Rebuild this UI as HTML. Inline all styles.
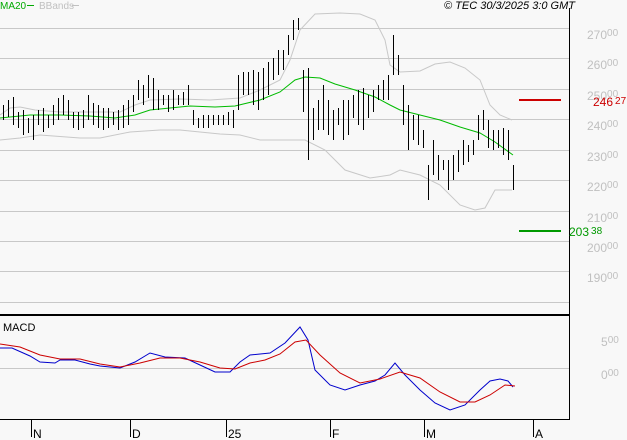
<!DOCTYPE html>
<html><head><meta charset="utf-8"><style>
html,body{margin:0;padding:0;background:#f8f8f8;width:627px;height:440px;overflow:hidden}
svg{display:block}
text{font-family:"Liberation Sans",sans-serif}
</style></head><body>
<svg width="627" height="440" xmlns="http://www.w3.org/2000/svg">
<rect width="627" height="440" fill="#f8f8f8"/>
<g stroke="#c8c8c8" stroke-width="1">
<line x1="0" y1="28.5" x2="569" y2="28.5"/><line x1="0" y1="58.5" x2="569" y2="58.5"/>
<line x1="0" y1="89.5" x2="569" y2="89.5"/><line x1="0" y1="119.5" x2="569" y2="119.5"/>
<line x1="0" y1="150.5" x2="569" y2="150.5"/><line x1="0" y1="180.5" x2="569" y2="180.5"/>
<line x1="0" y1="211.5" x2="569" y2="211.5"/><line x1="0" y1="241.5" x2="569" y2="241.5"/>
<line x1="0" y1="271.5" x2="569" y2="271.5"/><line x1="0" y1="302.5" x2="569" y2="302.5"/>
<line x1="0" y1="368.5" x2="569" y2="368.5"/>
</g>
<g fill="none" stroke="#c8c8c8" stroke-width="1">
<polyline points="0,115 10,108 20,107 35,110 60,112 90,112 120,112 135,105 150,100 180,99 210,100 240,98 260,90 280,80 290,60 300,30 315,14 340,13 360,14 375,20 385,40 390,65 400,72 420,71 435,64 450,62 465,68 480,80 490,105 500,115 512,120"/>
<polyline points="0,140 20,138 40,135 80,138 100,138 130,132 160,130 180,130 200,132 220,134 240,135 260,140 290,140 305,140 325,150 345,170 370,178 390,175 400,170 420,175 440,185 460,205 475,210 485,208 495,190 512,190"/>
</g>
<polyline fill="none" stroke="#00bb00" stroke-width="1" points="0,118 30,115 60,115 90,116 115,118 135,115 150,110 170,108 190,106 215,107 235,106 260,100 280,92 295,80 305,77 320,78 335,84 355,90 375,97 390,105 400,110 420,115 440,120 460,127 480,133 495,142 513,155"/>
<g transform="translate(0.5,0)">
<path stroke="#000" stroke-width="1" fill="none" shape-rendering="crispEdges" d="M3,105V120M8,100V117M13,97V125M18,112V128M23,110V135M28,118V133M33,115V140M38,110V125M43,108V132M48,115V128M53,105V125M58,98V120M63,95V115M68,100V120M73,112V128M78,112V130M83,110V128M88,95V120M93,103V125M98,105V128M103,108V130M108,108V128M113,112V125M118,110V130M123,105V128M128,100V125M133,95V112M138,80V100M143,85V105M148,75V98M153,78V110M158,90V110M163,95V105M168,95V112M173,90V110M178,95V105M183,92V105M188,85V105M193,110V125M198,118V128M203,115V128M208,115V128M213,115V125M218,115V125M223,115V125M228,112V125M233,110V128M238,75V110M243,72V95M248,72V95M253,70V105M258,72V110M263,68V100M268,62V95M273,58V80M278,50V75M283,50V70M288,35V55M293,20V40M298,18V30M303,70V112M308,68V160M313,108V140M318,100V130M323,85V130M328,100V135M333,110V140M338,108V125M343,100V140M348,100V135M353,95V118M358,90V125M363,88V130M368,95V118M373,90V112M378,85V100M383,80V100M388,75V100M393,35V75M398,55V75M403,85V125M408,105V150M413,115V140M418,115V145M423,130V148M428,165V200M433,140V175M438,155V180M443,160V170M448,160V190M453,155V180M458,150V172M463,140V165M468,145V162M473,140V155M478,115V140M483,110V130M488,120V148M493,130V150M498,130V148M503,128V155M508,130V160M513,165V190"/>
</g>
<rect x="0" y="314" width="570" height="2" fill="#000"/>
<line x1="569.5" y1="8" x2="569.5" y2="420" stroke="#000"/>
<line x1="0" y1="419.5" x2="570" y2="419.5" stroke="#000"/>
<g stroke="#000"><line x1="31.5" y1="420" x2="31.5" y2="437"/><line x1="130.5" y1="420" x2="130.5" y2="437"/><line x1="226.5" y1="420" x2="226.5" y2="437"/><line x1="330.5" y1="420" x2="330.5" y2="437"/><line x1="424.5" y1="420" x2="424.5" y2="437"/><line x1="533.5" y1="420" x2="533.5" y2="437"/></g>
<g font-size="12" fill="#000"><text x="33" y="438">N</text><text x="132" y="438">D</text><text x="228" y="438">25</text><text x="332" y="438">F</text><text x="426" y="438">M</text><text x="535" y="438">A</text></g>
<polyline fill="none" stroke="#0000cc" stroke-width="1" points="0,348 12,348 30,356 40,362 55,363 60,360 75,360 90,364 100,366 120,368 135,362 150,353 165,357 185,358 200,365 215,372 230,372 240,362 250,355 270,353 285,343 300,327 308,340 315,370 330,385 345,390 360,385 375,381 385,375 395,363 405,375 420,390 435,403 450,410 465,405 480,390 490,381 500,379 508,381 513,387"/>
<polyline fill="none" stroke="#cc0000" stroke-width="1" points="0,344 20,347 40,355 60,359 80,359 100,364 120,367 140,363 160,358 180,358 200,362 220,368 235,369 250,363 265,360 280,354 295,342 306,340 320,355 340,373 360,383 380,379 400,372 420,378 440,392 460,402 475,402 490,395 505,385 515,386"/>
<text x="3" y="331" font-size="11" fill="#000">MACD</text>
<text x="0" y="9" font-size="10" fill="#00aa00">MA20</text>
<line x1="27" y1="5.5" x2="34" y2="5.5" stroke="#00aa00"/>
<text x="39" y="9" font-size="10" fill="#c0c0c0">BBands</text>
<line x1="72" y1="5.5" x2="79" y2="5.5" stroke="#c0c0c0"/>
<text x="575" y="9" font-size="11" font-style="italic" fill="#000" text-anchor="end">© TEC 30/3/2025 3:0 GMT</text>
<g font-size="12" fill="#c0c0c0">
<text x="587" y="39">270<tspan font-size="10" dy="-3">00</tspan></text>
<text x="587" y="69">260<tspan font-size="10" dy="-3">00</tspan></text>
<text x="587" y="100">250<tspan font-size="10" dy="-3">00</tspan></text>
<text x="587" y="130">240<tspan font-size="10" dy="-3">00</tspan></text>
<text x="587" y="161">230<tspan font-size="10" dy="-3">00</tspan></text>
<text x="587" y="191">220<tspan font-size="10" dy="-3">00</tspan></text>
<text x="587" y="222">210<tspan font-size="10" dy="-3">00</tspan></text>
<text x="587" y="252">200<tspan font-size="10" dy="-3">00</tspan></text>
<text x="587" y="282">190<tspan font-size="10" dy="-3">00</tspan></text>
<text x="601" y="346">5<tspan font-size="10" dy="-3">00</tspan></text>
<text x="601" y="379">0<tspan font-size="10" dy="-3">00</tspan></text>
</g>
<rect x="519" y="99" width="42" height="2" fill="#cc0000"/>
<text x="593" y="106" font-size="12" fill="#cc0000">246<tspan font-size="10" dx="2" dy="-2">27</tspan></text>
<rect x="519" y="230" width="42" height="2" fill="#009900"/>
<text x="569" y="236" font-size="12" fill="#009900">203<tspan font-size="10" dx="2" dy="-2">38</tspan></text>
</svg>
</body></html>
